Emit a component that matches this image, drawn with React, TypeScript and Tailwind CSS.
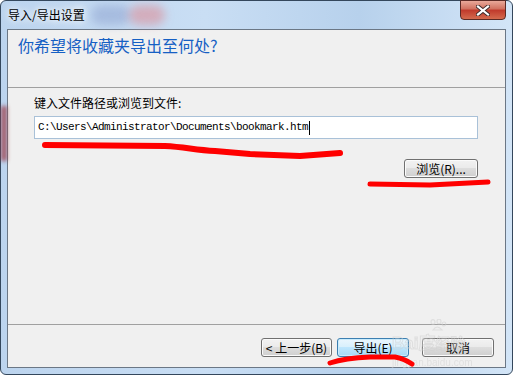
import type { ReactNode } from "react";

// Windows 7 style "Import/Export settings" wizard page with red marker notes
const CJK = "font-['SimSun','Noto_Sans_CJK_SC',sans-serif]";

function Btn({ children, primary, className = "" }: { children: ReactNode; primary?: boolean; className?: string }) {
  return (
    <div
      className={
        "flex h-[19px] items-center justify-center rounded-[3px] border text-[12px] leading-none text-black " +
        (primary
          ? "border-[#3c7fb1] bg-[linear-gradient(#eaf6fd,#d9f0fc_45%,#bee6fd_50%,#a7d9f5)] shadow-[inset_0_0_0_1px_#c9ecfd]"
          : "border-[#707070] bg-[linear-gradient(#f2f2f2,#ebebeb_45%,#dddddd_50%,#cfcfcf)] shadow-[inset_0_0_0_1px_#fbfbfb]") +
        " " +
        className
      }
    >
      {children}
    </div>
  );
}

export default function App() {
  return (
    <div className={`relative h-[375px] w-[513px] overflow-hidden bg-white ${CJK}`}>
      {/* window frame */}
      <div className="relative flex h-full w-full flex-col rounded-[6px] border border-[#34475c] bg-[linear-gradient(90deg,#bcd4ee,#c9def4_40%,#b7d1ec_70%,#d3e5f7)] px-[6px] pb-[6px]">
        {/* glass blur behind title */}
        <div className="pointer-events-none absolute left-[90px] top-[4px] h-[20px] w-[40px] rounded-full bg-[#9bb0d8] opacity-70 blur-[5px]" />
        <div className="pointer-events-none absolute left-[128px] top-[4px] h-[20px] w-[36px] rounded-full bg-[#d99aa6] opacity-70 blur-[5px]" />
        <div className="pointer-events-none absolute left-0 top-[105px] h-[55px] w-[6px] bg-[#9a3a46] opacity-80 blur-[2px]" />

        {/* title bar */}
        <div className="relative flex h-[28px] shrink-0 items-center pl-[1px]">
          <span className="text-[12px] leading-none text-black [text-shadow:0_0_6px_#fff,0_0_10px_#fff]">导入/导出设置</span>
          <div className="absolute right-[0px] top-[-1px] flex h-[20px] w-[46px] items-center justify-center rounded-b-[4px] border border-[#5a2a25] bg-[linear-gradient(#e9a99a,#d0705e_45%,#c0392b_50%,#d46a4e)]">
            <svg width="14" height="11" viewBox="0 0 14 11">
              <path d="M2 1.5 L12 9.5 M12 1.5 L2 9.5" stroke="#3b2a2a" strokeWidth="4" strokeLinecap="square" />
              <path d="M2 1.5 L12 9.5 M12 1.5 L2 9.5" stroke="#ffffff" strokeWidth="2.2" strokeLinecap="square" />
            </svg>
          </div>
        </div>

        {/* client area */}
        <div className="flex flex-1 flex-col border border-[#6b7785] bg-[#f0f0f0]">
          <div className="h-[58px] border-b border-[#a0a0a0] pl-[10px] pt-[5px]">
            <div className="text-[16px] leading-[20px] text-[#1660c4]">你希望将收藏夹导出至何处?</div>
          </div>

          <div className="flex flex-1 flex-col px-[26px] pt-[7px]">
            <div className="text-[12px] leading-[16px] text-black">键入文件路径或浏览到文件:</div>
            <div className="mt-[5px] flex h-[23px] w-[444px] items-center border border-[#a9c1d8] bg-white pl-[3px]">
              <span className="font-['Liberation_Mono','DejaVu_Sans_Mono',monospace] text-[11px] tracking-[-0.6px] text-black">
                C:\Users\Administrator\Documents\bookmark.htm
              </span>
              <span className="ml-[1px] h-[14px] w-[1px] bg-black" />
            </div>
            <div className="mt-[20px] flex w-[444px] justify-end">
              <Btn className="w-[74px]">浏览(R)...</Btn>
            </div>
          </div>

          <div className="flex h-[43px] items-start justify-end border-t border-[#a0a0a0] pr-[11px] pt-[13px]">
            <Btn className="w-[71px]">&lt; 上一步(B)</Btn>
            <Btn primary className="ml-[5px] w-[72px]">导出(E)</Btn>
            <Btn className="ml-[13px] w-[72px]">取消</Btn>
          </div>
        </div>
      </div>

      {/* baidu watermark */}
      <div className="pointer-events-none absolute left-[392px] top-[319px] flex flex-col items-start opacity-50">
        <svg className="ml-[36px]" width="20" height="13" viewBox="0 0 20 13" fill="none" stroke="#cfcfcf" strokeWidth="1.2">
          <ellipse cx="5" cy="3" rx="2" ry="2.4" />
          <ellipse cx="11" cy="2.5" rx="2" ry="2.4" />
          <ellipse cx="16" cy="5" rx="1.8" ry="2" />
          <path d="M5 11 Q9 5 14 11 Z" />
        </svg>
        <span className="mt-[1px] font-['Liberation_Sans',sans-serif] text-[17px] font-bold leading-none text-transparent [-webkit-text-stroke:1px_#cdcdcd]">
          Bai<span className="font-['Noto_Sans_CJK_SC',sans-serif]">度</span>
          <span className="font-['Noto_Sans_CJK_SC',sans-serif] text-[15px]">经验</span>
        </span>
        <span className="mt-[6px] font-['Liberation_Sans',sans-serif] text-[10px] leading-none text-[#d0d0d0]">jingyan.baidu.com</span>
      </div>

      {/* red marker strokes */}
      <svg className="pointer-events-none absolute inset-0" width="513" height="375" viewBox="0 0 513 375">
        <g fill="none" stroke="#ff0000" strokeLinecap="round" strokeLinejoin="round">
          <path d="M45 145 L165 146 C185 147 195 150 215 151 L250 154 L300 156 L340 153" strokeWidth="6" />
          <path d="M370 184 L430 185 L488 182" strokeWidth="5" />
          <path d="M330 363 Q345 358 370 357 L395 357 Q405 359 412 364" strokeWidth="5" />
        </g>
      </svg>
    </div>
  );
}
